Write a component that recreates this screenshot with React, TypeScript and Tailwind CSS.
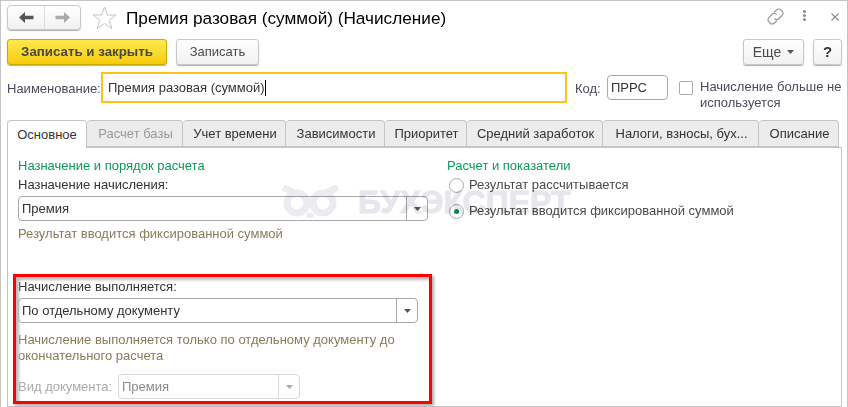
import type { ReactNode } from "react";

const tabs = [
  { label: "Основное", w: "w-[80px]", active: true },
  { label: "Расчет базы", w: "w-[96px]", muted: true },
  { label: "Учет времени", w: "w-[103px]" },
  { label: "Зависимости", w: "w-[99px]" },
  { label: "Приоритет", w: "w-[82px]" },
  { label: "Средний заработок", w: "w-[136px]" },
  { label: "Налоги, взносы, бух...", w: "w-[156px]" },
  { label: "Описание", w: "w-[80px]" },
];

function Caret({ color = "#555" }: { color?: string }) {
  return (
    <svg width="7" height="4" viewBox="0 0 7 4">
      <path d="M0 0h7L3.5 4z" fill={color} />
    </svg>
  );
}

function Select({ value, width, muted }: { value: string; width: string; muted?: boolean }) {
  return (
    <div
      className={`flex h-[25px] items-center rounded-[4px] border bg-white ${width} ${
        muted ? "border-[#d8d8d8] text-[#8a8a8a]" : "border-[#a9a9a9] text-[#333]"
      }`}
    >
      <span className="flex-1 pl-[3px]">{value}</span>
      <span
        className={`flex h-full w-[21px] items-center justify-center border-l ${
          muted ? "border-[#d8d8d8]" : "border-[#a9a9a9]"
        }`}
      >
        <Caret color={muted ? "#aaa" : "#555"} />
      </span>
    </div>
  );
}

function Radio({ checked, children }: { checked?: boolean; children: ReactNode }) {
  return (
    <div className="flex h-[16px] items-center gap-[5px] whitespace-nowrap pl-[2px] text-[#4a4a4a]">
      <span className="flex h-[15px] w-[15px] items-center justify-center rounded-full border border-[#a9a9a9] bg-white">
        {checked && <span className="h-[5px] w-[5px] rounded-full bg-[#0a8f4f]" />}
      </span>
      {children}
    </div>
  );
}

export default function App() {
  return (
    <div className="relative h-[407px] w-[848px] overflow-hidden border-x border-t border-[#c4c4c4] bg-white pl-[6px] pr-[5px] font-['Liberation_Sans',Arial,sans-serif] text-[13px] text-[#333]">
      {/* title */}
      <div className="flex h-[38px] items-start pt-[4px]">
        <div className="flex h-[25px] w-[74px] rounded-[4px] border border-[#c8c8c8] bg-gradient-to-b from-white to-[#f1f1f1] shadow-[0_1px_1px_#b0b0b0]">
          <span className="flex w-[37px] items-center justify-center border-r border-[#dcdcdc]">
            <svg width="15" height="11" viewBox="0 0 15 11">
              <path d="M6 0 0 5.500 6 11V7.200h8.500V3.800H6z" fill="#555" />
            </svg>
          </span>
          <span className="flex flex-1 items-center justify-center">
            <svg width="15" height="11" viewBox="0 0 15 11">
              <path d="M9 0l6 5.500L9 11V7.200H.5V3.800H9z" fill="#aaa" />
            </svg>
          </span>
        </div>
        <svg className="ml-[11px] mt-[1px]" width="25" height="24" viewBox="0 0 25 24">
          <path d="M12.500 1l3 8h8.500l-6.800 5.200 2.600 8.300-7.300-5-7.300 5 2.600-8.300L1 9h8.500z" fill="white" stroke="#c4c4c4" />
        </svg>
        <span className="ml-[9px] mt-[1px] text-[17.2px] leading-[24px] text-black">Премия разовая (суммой) (Начисление)</span>
        <div className="ml-auto flex items-start">
          <svg className="mt-[3px]" width="17" height="17" viewBox="0 0 17 17" fill="none" stroke="#9a9a9a" strokeWidth="1.2">
            <path d="M7 4.500 9.500 2a3 3 0 0 1 4.500 0l1 1a3 3 0 0 1 0 4.500L12 10.500a3 3 0 0 1-4.500 0" />
            <path d="M10 12.500 7.500 15a3 3 0 0 1-4.500 0l-1-1a3 3 0 0 1 0-4.500L5 6.500a3 3 0 0 1 4.500 0" />
          </svg>
          <span className="ml-[19px] mt-[5px] flex flex-col gap-[1px]">
            <span className="h-[3px] w-[3px] rounded-full bg-[#8a8a8a]" />
            <span className="h-[3px] w-[3px] rounded-full bg-[#8a8a8a]" />
            <span className="h-[3px] w-[3px] rounded-full bg-[#8a8a8a]" />
          </span>
          <svg className="ml-[25px] mr-[3px] mt-[8px]" width="8" height="8" viewBox="0 0 8 8" stroke="#8a8a8a" strokeWidth="1.1">
            <path d="M.5.5l7 7M7.500.5l-7 7" />
          </svg>
        </div>
      </div>

      {/* command bar */}
      <div className="flex h-[33px] items-start">
        <button className="h-[26px] w-[160px] rounded-[3px] border border-[#c9a900] bg-gradient-to-b from-[#ffe94a] to-[#f5cb00] text-[13.3px] font-bold text-[#4a4a3a] shadow-[0_1px_1px_#b0b0b0]">
          Записать и закрыть
        </button>
        <button className="ml-[9px] h-[26px] w-[83px] rounded-[3px] border border-[#c8c8c8] bg-gradient-to-b from-white to-[#f1f1f1] text-[#4a4a4a] shadow-[0_1px_1px_#b0b0b0]">
          Записать
        </button>
        <button className="ml-auto flex h-[26px] w-[61px] items-center justify-center gap-[6px] rounded-[3px] border border-[#c8c8c8] bg-gradient-to-b from-white to-[#f1f1f1] text-[14px] text-[#4a4a4a] shadow-[0_1px_1px_#b0b0b0]">
          Еще
          <Caret />
        </button>
        <button className="ml-[9px] h-[26px] w-[29px] rounded-[3px] border border-[#c8c8c8] bg-gradient-to-b from-white to-[#f1f1f1] text-[15px] font-bold text-[#333] shadow-[0_1px_1px_#b0b0b0]">
          ?
        </button>
      </div>

      {/* name row */}
      <div className="flex h-[48px] items-start">
        <span className="mt-[7px] w-[94px] text-[#4a4a5a]">Наименование:</span>
        <div className="flex h-[31px] w-[466px] items-center border-2 border-[#f7c51e] pl-[5px]">
          <span>Премия разовая (суммой)</span>
          <span className="h-[16px] w-px bg-black" />
        </div>
        <span className="ml-[8px] mt-[7px] w-[32px] text-[#4a4a5a]">Код:</span>
        <div className="mt-[3px] flex h-[25px] w-[61px] items-center rounded-[4px] border border-[#a9a9a9] pl-[3px]">ПРРС</div>
        <span className="ml-[11px] mt-[9px] h-[14px] w-[14px] rounded-[2px] border border-[#a9a9a9] bg-white" />
        <span className="ml-[7px] mt-[7px] w-[142px] leading-[16px] text-[#4a4a5a]">Начисление больше не используется</span>
      </div>

      {/* tabs */}
      <div className="flex h-[27px]">
        {tabs.map((t) => (
          <div
            key={t.label}
            className={`relative z-10 flex items-center justify-center whitespace-nowrap rounded-t-[4px] border border-[#c4c4c4] ${t.w} ${
              t.active ? "h-[28px] border-b-0 bg-white" : "h-[27px] border-l-0 bg-[#ececec] pl-[2px]"
            } ${t.muted ? "text-[#999]" : "text-[#333]"}`}
          >
            {t.label}
          </div>
        ))}
      </div>

      {/* panel */}
      <div className="flex h-[260px] border border-[#c4c4c4] pl-[10px]">
        <div className="w-[429px]">
          <div className="mt-[9px] h-[18px] leading-[18px] text-[#0a9a5a]">Назначение и порядок расчета</div>
          <div className="mt-[1px] h-[18px] leading-[18px]">Назначение начисления:</div>
          <div className="mt-[2px]">
            <Select value="Премия" width="w-[410px]" />
          </div>
          <div className="mt-[5px] h-[16px] leading-[16px] text-[#8a7a5a]">Результат вводится фиксированной суммой</div>
          <div className="mt-[37px] h-[16px] leading-[16px]">Начисление выполняется:</div>
          <div className="mt-[3px]">
            <Select value="По отдельному документу" width="w-[400px]" />
          </div>
          <div className="mt-[9px] w-[400px] leading-[16px] text-[#8a7a5a]">
            Начисление выполняется только по отдельному документу до окончательного расчета
          </div>
          <div className="mt-[10px] flex items-center">
            <span className="w-[100px] text-[#aaa]">Вид документа:</span>
            <Select value="Премия" width="w-[182px]" muted />
          </div>
        </div>
        <div>
          <div className="mt-[9px] h-[18px] leading-[18px] text-[#0a9a5a]">Расчет и показатели</div>
          <div className="mt-[2px]">
            <Radio>Результат рассчитывается</Radio>
          </div>
          <div className="mt-[10px]">
            <Radio checked>Результат вводится фиксированной суммой</Radio>
          </div>
        </div>
      </div>

      {/* watermark */}
      <div className="pointer-events-none absolute left-[281px] top-[184px] flex items-center gap-[19px] whitespace-nowrap text-[32px] font-bold leading-[34px] text-[#e6e6ec] mix-blend-multiply [-webkit-text-stroke:1px_#e6e6ec]">
        <svg width="57" height="34" viewBox="0 0 57 34" fill="none" stroke="#ececf0" strokeWidth="7">
          <circle cx="15" cy="18" r="10" />
          <circle cx="41" cy="18" r="10" />
          <path d="M1 2l11 6M56 2 44 8M28 28l0 5" />
        </svg>
        <span>БУХЭКСПЕРТ</span>
      </div>

      {/* red highlight */}
      <div className="pointer-events-none absolute left-[12px] top-[273px] h-[130px] w-[419px] border-[3px] border-[#f00] shadow-[2px_2px_3px_#aaa,inset_3px_3px_3px_#bbb]" />
    </div>
  );
}
